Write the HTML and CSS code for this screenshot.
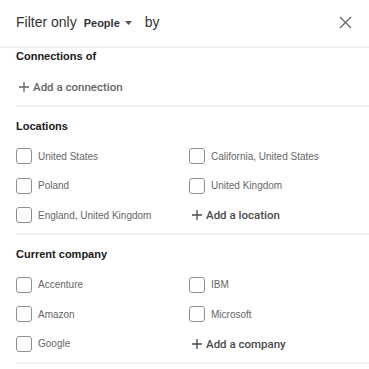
FILE: index.html
```html
<!DOCTYPE html>
<html lang="en">
<head>
<meta charset="utf-8">
<title>Filter</title>
<link rel="stylesheet" href="styles.css">
</head>
<body>
<div class="panel">
  <header class="header">
    <span class="title">Filter only</span>
    <button class="type">People
      <svg class="caret" width="7" height="4" viewBox="0 0 7 4"><path d="M0 0h7L3.5 4z" fill="#555"/></svg>
    </button>
    <span class="title by">by</span>
    <button class="close" aria-label="Close">
      <svg width="13" height="13" viewBox="0 0 13 13"><path d="M1 1l11 11M12 1L1 12" stroke="#666" stroke-width="1.3" fill="none"/></svg>
    </button>
  </header>

  <section class="section section--first">
    <div class="inner">
      <h3 class="heading">Connections of</h3>
      <div class="rows">
        <button class="add add--light"><svg width="10" height="10" viewBox="0 0 10 10"><path d="M5 0v10M0 5h10" stroke="currentColor" stroke-width="1.3"/></svg>Add a connection</button>
      </div>
    </div>
  </section>

  <section class="section">
    <div class="inner">
      <h3 class="heading">Locations</h3>
      <div class="rows">
        <label class="opt"><span class="box"></span>United States</label>
        <label class="opt"><span class="box"></span>California, United States</label>
        <label class="opt"><span class="box"></span>Poland</label>
        <label class="opt"><span class="box"></span>United Kingdom</label>
        <label class="opt"><span class="box"></span>England, United Kingdom</label>
        <button class="add"><svg width="10" height="10" viewBox="0 0 10 10"><path d="M5 0v10M0 5h10" stroke="currentColor" stroke-width="1.3"/></svg>Add a location</button>
      </div>
    </div>
  </section>

  <section class="section">
    <div class="inner">
      <h3 class="heading">Current company</h3>
      <div class="rows">
        <label class="opt"><span class="box"></span>Accenture</label>
        <label class="opt"><span class="box"></span>IBM</label>
        <label class="opt"><span class="box"></span>Amazon</label>
        <label class="opt"><span class="box"></span>Microsoft</label>
        <label class="opt"><span class="box"></span>Google</label>
        <button class="add"><svg width="10" height="10" viewBox="0 0 10 10"><path d="M5 0v10M0 5h10" stroke="currentColor" stroke-width="1.3"/></svg>Add a company</button>
      </div>
    </div>
  </section>
</div>
</body>
</html>
```

FILE: styles.css
```css
* { box-sizing: border-box; }

html, body {
  margin: 0;
  padding: 0;
  background: #ffffff;
}

body {
  font-family: "Liberation Sans", Arial, sans-serif;
  color: #191919;
}

.panel {
  width: 369px;
}

.header {
  height: 48px;
  display: flex;
  align-items: center;
  padding: 0 17px 2px 16px;
  border-bottom: 2px solid #f3f3f3;
}

.title {
  font-size: 14px;
  color: #333;
  line-height: 20px;
}

.type {
  display: flex;
  align-items: center;
  margin: 1px 0 0 7px;
  padding: 0;
  border: 0;
  background: none;
  font-family: inherit;
  font-size: 11px;
  font-weight: bold;
  color: #333;
}

.caret {
  margin-left: 5px;
  margin-top: 1px;
}

.by {
  margin-left: 13px;
}

.close {
  margin-left: auto;
  padding: 0;
  border: 0;
  background: none;
  display: flex;
}

.section .inner {
  margin-left: 16px;
  padding: 12px 0 3px 0;
  border-bottom: 2px solid #f1f1f1;
}

.section--first .inner {
  padding-top: 1px;
}

.heading {
  margin: 0 0 9px 0;
  font-size: 11px;
  line-height: 14px;
  font-weight: bold;
  color: #191919;
}

.rows {
  display: grid;
  grid-template-columns: 173px 1fr;
  grid-auto-rows: 29.5px;
}

.opt {
  display: flex;
  align-items: center;
  gap: 6px;
  font-size: 10px;
  color: #666;
}

.box {
  width: 16px;
  height: 16px;
  border: 1px solid #8f8f8f;
  border-radius: 3px;
  background: #fff;
}

.add {
  display: flex;
  align-items: center;
  gap: 4px;
  padding: 0 0 0 3px;
  border: 0;
  background: none;
  font-family: Roboto, "Liberation Sans", sans-serif;
  font-weight: 500;
  font-size: 11.5px;
  color: #4a4a4a;
}

.add--light {
  color: #666;
}
```
